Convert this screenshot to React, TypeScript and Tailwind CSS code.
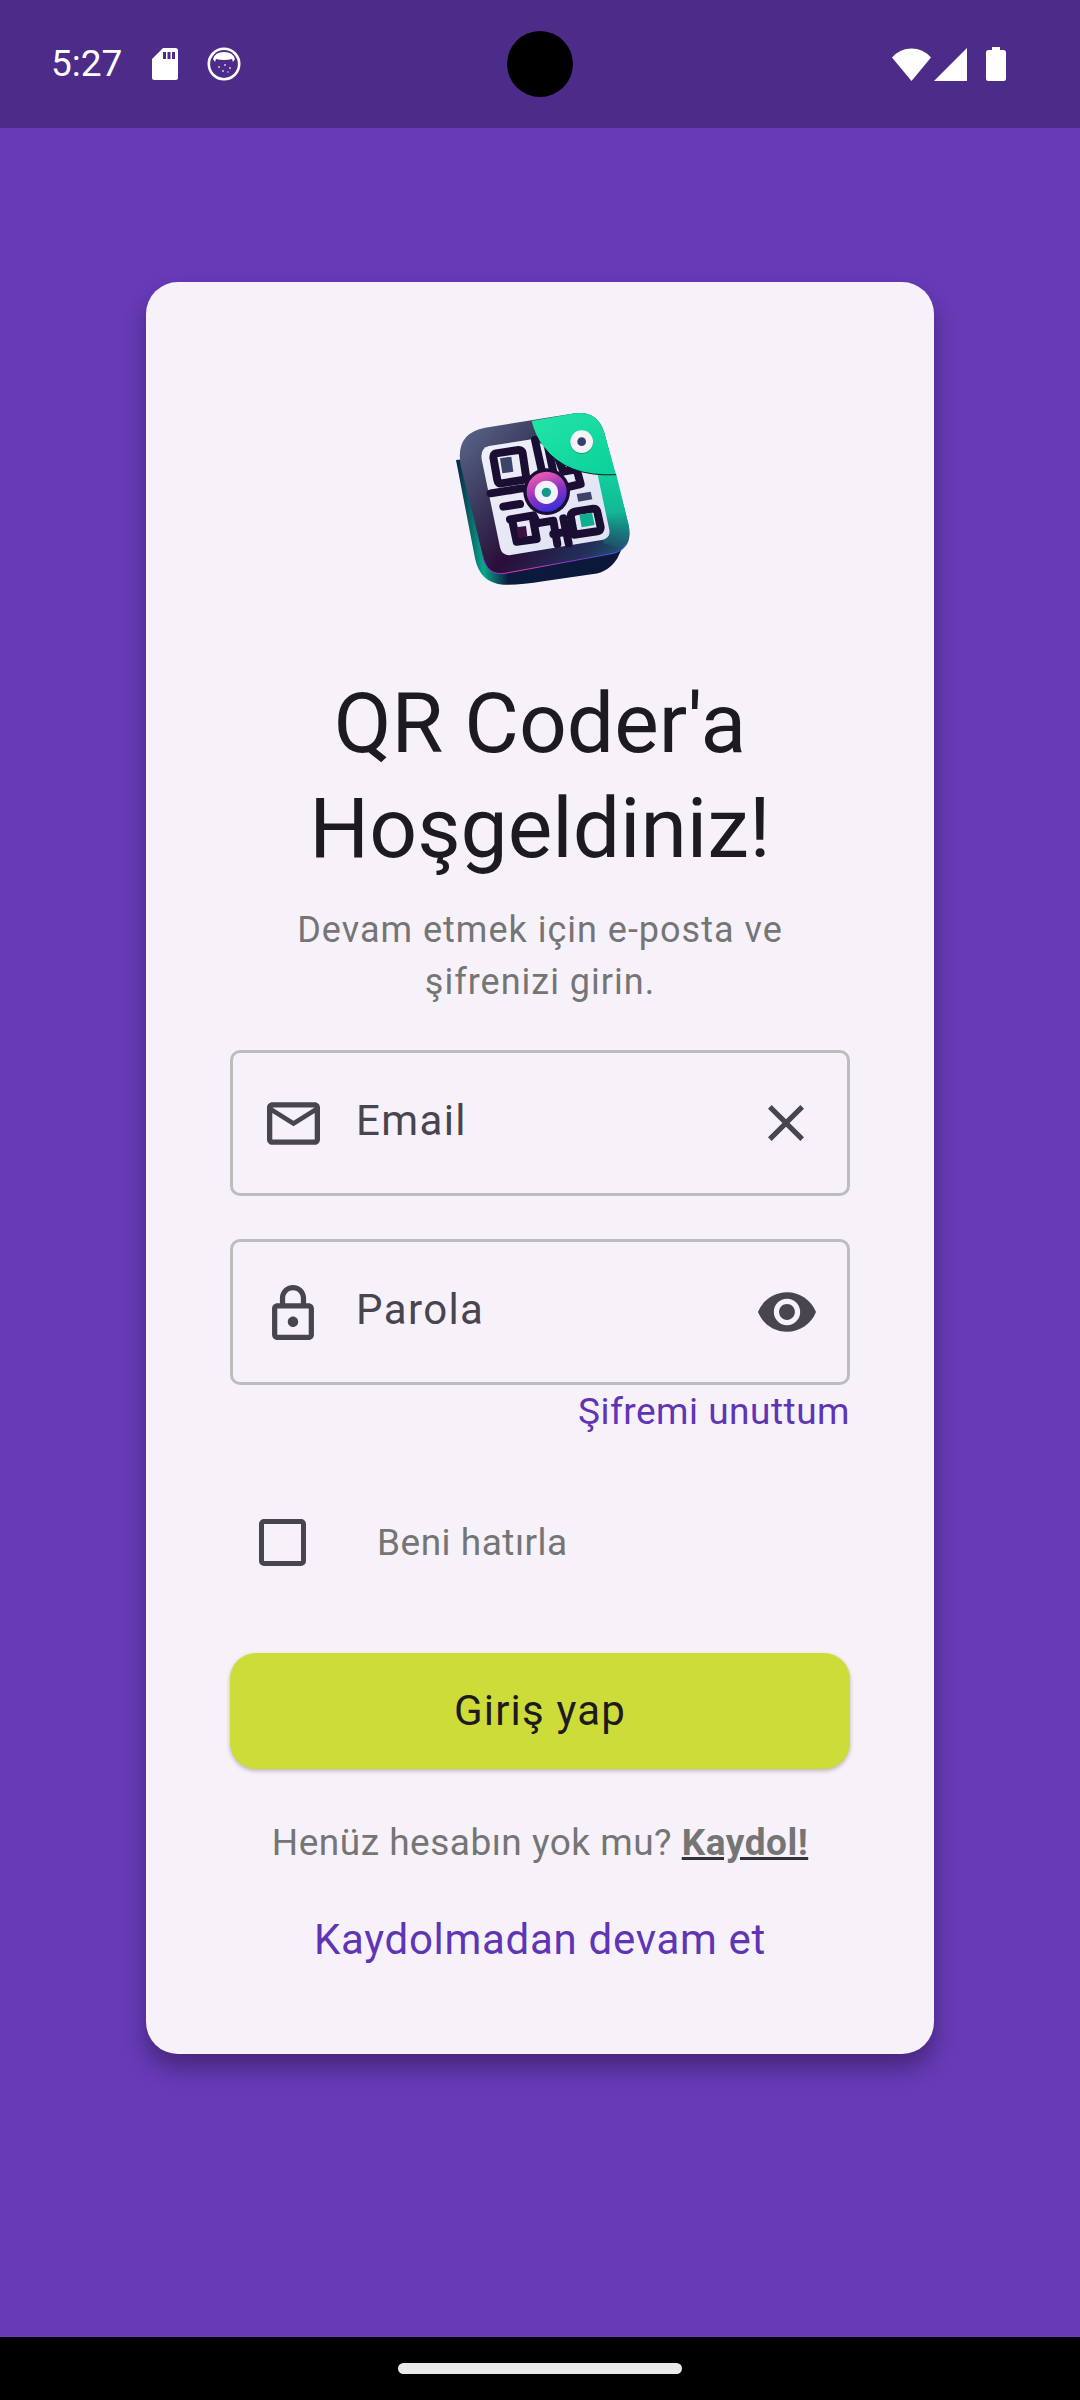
import React from "react";

const Logo = () => (
  <svg viewBox="0 0 720 600" className="w-[240px] h-[200px] block">
    <defs>
      <linearGradient id="face" x1="0.05" y1="0.05" x2="1" y2="0.85">
        <stop offset="0" stopColor="#59668a" />
        <stop offset="0.3" stopColor="#3c3a5c" />
        <stop offset="0.58" stopColor="#2a0d3a" />
        <stop offset="0.85" stopColor="#22305a" />
        <stop offset="1" stopColor="#1c5a70" />
      </linearGradient>
      <linearGradient id="side" gradientUnits="userSpaceOnUse" x1="590" y1="250" x2="600" y2="480">
        <stop offset="0" stopColor="#10d09c" />
        <stop offset="0.5" stopColor="#12b898" />
        <stop offset="1" stopColor="#12b898" stopOpacity="0" />
      </linearGradient>
      <linearGradient id="base" x1="0" y1="0" x2="1" y2="0">
        <stop offset="0" stopColor="#0a1f45" />
        <stop offset="0.16" stopColor="#0aa88c" />
        <stop offset="0.3" stopColor="#0a1b3e" />
        <stop offset="1" stopColor="#0c1738" />
      </linearGradient>
      <linearGradient id="rim" x1="0" y1="0" x2="1" y2="0">
        <stop offset="0" stopColor="#6a2bd0" />
        <stop offset="0.25" stopColor="#ec3fa8" />
        <stop offset="0.7" stopColor="#7a35d8" />
        <stop offset="1" stopColor="#3f5cf0" />
      </linearGradient>
      <linearGradient id="flap" x1="0" y1="0" x2="1" y2="1">
        <stop offset="0" stopColor="#22e6a6" />
        <stop offset="1" stopColor="#0ccf9c" />
      </linearGradient>
      <linearGradient id="qr" x1="0" y1="0" x2="1" y2="1">
        <stop offset="0" stopColor="#f0f0fa" />
        <stop offset="1" stopColor="#dfe0f2" />
      </linearGradient>
      <linearGradient id="lens" x1="0.3" y1="0" x2="0.7" y2="1">
        <stop offset="0" stopColor="#f45fb0" />
        <stop offset="0.55" stopColor="#8a2fc0" />
        <stop offset="1" stopColor="#2f2fe0" />
      </linearGradient>
    </defs>
    <path d="M108 210 L165 505 Q180 580 250 584 Q300 586 370 574 L520 552 Q565 548 592 505 L628 430 L560 300 L200 200 Z" fill="url(#base)" />
    <path d="M195 113 L465 70 Q530 60 552 125 L626 405 Q640 475 580 490 L255 550 Q200 558 188 495 L122 225 Q105 130 195 113 Z" fill="url(#face)" />
    <path d="M525 235 L588 250 L626 405 Q632 445 612 478 L550 460 Z" fill="url(#side)" />
    <path d="M188 495 Q200 558 255 550 L580 490 Q605 484 618 462" fill="none" stroke="url(#rim)" strokeWidth="3" />
    <path d="M207 168 L335 148 L530 240 L568 420 Q572 445 545 450 L272 495 Q246 499 240 472 L185 208 Q180 174 207 168 Z" fill="url(#qr)" />
    <g fill="none" stroke="#1b0e33" strokeWidth="24" strokeLinejoin="round" strokeLinecap="round">
      <path d="M228 190 L296 180 Q306 180 308 190 L318 258 Q318 268 308 270 L244 280 Q234 282 232 270 L220 202 Q220 192 228 190 Z" />
      <path d="M345 150 L365 240" />
      <path d="M385 175 L402 255" />
      <path d="M415 205 L430 245 L470 238 L482 282 L440 292" />
      <path d="M212 310 L300 296 Q325 290 330 320" />
      <path d="M250 350 L300 342" />
      <path d="M270 388 L340 376 L352 400" />
      <path d="M278 398 L290 455 L350 447 L340 392" />
      <path d="M350 400 L400 392 L412 462" />
      <path d="M430 385 L446 460" />
      <path d="M400 432 L460 422" />
      <path d="M468 364 L520 356 Q530 356 532 366 L542 412 Q542 422 532 424 L462 434 L452 378 Q452 368 468 364 Z" />
    </g>
    <path d="M240 205 L274 200 L280 245 L247 250 Z" fill="#3d4468" />
    <path d="M470 312 L512 305 L517 328 L475 335 Z" fill="#3d4468" />
    <path d="M478 374 L516 368 L524 405 L485 412 Z" fill="#0fae90" />
    <path d="M290 412 L318 408 L322 440 L295 444 Z" fill="#3a1440" />
    <circle cx="380" cy="305" r="70" fill="#1b0e33" />
    <circle cx="380" cy="305" r="60" fill="url(#lens)" />
    <circle cx="379" cy="307" r="35" fill="#f2f2fa" />
    <circle cx="379" cy="307" r="14" fill="#129a86" />
    <path d="M335 93 L465 70 Q530 60 552 125 L588 254 Q440 262 372 172 Q345 135 335 93 Z" fill="url(#flap)" />
    <path d="M372 172 Q440 262 588 254" fill="none" stroke="#0c1a33" strokeWidth="3" />
    <circle cx="485" cy="158" r="34" fill="#1b3a4a" opacity="0.35" />
    <circle cx="485" cy="155" r="34" fill="#f4f4f6" />
    <circle cx="485" cy="155" r="13" fill="#33406c" />
  </svg>
);

const icon = "fill-[#49454f] shrink-0";

const App = () => {
  return (
    <div className="w-[1080px] h-[2400px] flex flex-col bg-[#673ab7] font-['Roboto',sans-serif]">
      <div className="relative h-[128px] shrink-0 bg-[#4c2c88] flex items-center justify-between pl-[51px] pr-[74px] text-white">
        <div className="flex items-center">
          <span className="text-[37px] leading-[44px] font-normal mr-[30px]">5:27</span>
          <svg viewBox="0 0 26 32" className="w-[26px] h-[32px] fill-white mr-[29px]">
            <path d="M11 0 H23.5 Q26 0 26 2.5 V29.5 Q26 32 23.5 32 H2.5 Q0 32 0 29.5 V11 Z M11 4 V11 H14 V4 Z M15.5 4 V11 H18.5 V4 Z M20 4 V11 H23 V4 Z" fillRule="evenodd" />
          </svg>
          <svg viewBox="0 0 34 34" className="w-[34px] h-[34px]">
            <circle cx="17" cy="17" r="15.2" fill="none" stroke="#ffffff" strokeWidth="2.6" />
            <circle cx="17" cy="17" r="12" fill="#4c2c88" />
            <path d="M6 12 Q8 5 17 5 Q26 5 28 12 L26 15 L25 12 Q21 13 17 13 Q13 13 9 12 L8 15 Z" fill="#ffffff" />
            <g fill="#ffffff" opacity="0.75">
              <circle cx="12" cy="20" r="1" />
              <circle cx="18" cy="18" r="1" />
              <circle cx="23" cy="21" r="1" />
              <circle cx="16" cy="24" r="1" />
              <circle cx="21" cy="25" r="0.8" />
            </g>
          </svg>
        </div>
        <div className="absolute left-[507px] top-[31px] w-[66px] h-[66px] rounded-full bg-black" />
        <div className="flex items-center">
          <svg viewBox="0 0 39 33" className="w-[39px] h-[33px] fill-white mr-[3px]">
            <path d="M19.5 33 L0 9.5 Q8 0.5 19.5 0.5 Q31 0.5 39 9.5 Z" />
          </svg>
          <svg viewBox="0 0 33 33" className="w-[33px] h-[33px] fill-white mr-[19px]">
            <path d="M33 0 V33 H0 Z" />
          </svg>
          <svg viewBox="0 0 20 34" className="w-[20px] h-[34px] fill-white">
            <path d="M6 0 H14 V3 H17.5 Q20 3 20 5.5 V31.5 Q20 34 17.5 34 H2.5 Q0 34 0 31.5 V5.5 Q0 3 2.5 3 H6 Z" />
          </svg>
        </div>
      </div>

      <div className="flex-1 px-[146px] pt-[154px]">
        <div className="h-[1772px] rounded-[32px] bg-[#f7f2fa] shadow-[0_14px_22px_rgba(0,0,0,0.32)] px-[84px] flex flex-col">
          <div className="flex justify-center mt-[108px]">
            <Logo />
          </div>
          <h1 className="mt-[81px] text-center text-[84px] leading-[105px] font-normal text-[#1d1b20]">
            QR Coder'a
            <br />
            Hoşgeldiniz!
          </h1>
          <p className="mt-[23px] px-[30px] text-center text-[36px] leading-[52px] tracking-[1px] text-[#757575]">
            Devam etmek için e-posta ve şifrenizi girin.
          </p>

          <div className="mt-[42px] h-[146px] rounded-[10px] border-[3px] border-[#bdbdbd] flex items-center pl-[34px] pr-[30px]">
            <svg viewBox="2 4 20 16" className={`w-[53px] h-[43px] ${icon}`}>
              <path d="M20 4H4c-1.1 0-1.99.9-1.99 2L2 18c0 1.1.9 2 2 2h16c1.1 0 2-.9 2-2V6c0-1.1-.9-2-2-2zm0 14H4V8l8 5 8-5v10zm-8-7L4 6h16l-8 5z" />
            </svg>
            <span className="ml-[36px] flex-1 pb-[5px] text-[42px] leading-[50px] tracking-[1.4px] text-[#49454f]">Email</span>
            <svg viewBox="5 5 14 14" className={`w-[36px] h-[36px] mr-[13px] ${icon}`}>
              <path d="M19 6.41L17.59 5 12 10.59 6.41 5 5 6.41 10.59 12 5 17.59 6.41 19 12 13.41 17.59 19 19 17.59 13.41 12z" />
            </svg>
          </div>

          <div className="mt-[43px] h-[146px] rounded-[10px] border-[3px] border-[#bdbdbd] flex items-center pl-[39px] pr-[31px]">
            <svg viewBox="4 1 16 21" className={`w-[42px] h-[55px] ${icon}`}>
              <path d="M18 8h-1V6c0-2.76-2.24-5-5-5S7 3.24 7 6v2H6c-1.1 0-2 .9-2 2v10c0 1.1.9 2 2 2h12c1.1 0 2-.9 2-2V10c0-1.1-.9-2-2-2zM9 6c0-1.66 1.34-3 3-3s3 1.34 3 3v2H9V6zm9 14H6V10h12v10zm-6-3c1.1 0 2-.9 2-2s-.9-2-2-2-2 .9-2 2 .9 2 2 2z" />
            </svg>
            <span className="ml-[42px] flex-1 pb-[5px] text-[42px] leading-[50px] tracking-[1.4px] text-[#49454f]">Parola</span>
            <svg viewBox="1 4.5 22 15" className={`w-[58px] h-[40px] ${icon}`}>
              <path d="M12 4.5C7 4.5 2.73 7.61 1 12c1.73 4.39 6 7.5 11 7.5s9.27-3.11 11-7.5c-1.73-4.39-6-7.5-11-7.5zM12 17c-2.76 0-5-2.24-5-5s2.24-5 5-5 5 2.24 5 5-2.24 5-5 5zm0-8c-1.66 0-3 1.34-3 3s1.34 3 3 3 3-1.34 3-3-1.34-3-3-3z" />
            </svg>
          </div>

          <div className="mt-[5px] text-right text-[37px] leading-[44px] tracking-[0.5px] text-[#6035b5]">Şifremi unuttum</div>

          <div className="mt-[85px] flex items-center pl-[29px]">
            <div className="w-[47px] h-[47px] rounded-[5px] border-[5px] border-[#49454f]" />
            <span className="ml-[71px] text-[37px] leading-[47px] tracking-[0.5px] text-[#757575]">Beni hatırla</span>
          </div>

          <button className="mt-[87px] h-[116px] pb-[2px] rounded-[26px] bg-[#cddc39] shadow-[0_2px_4px_rgba(0,0,0,0.25)] text-[42px] tracking-[1.2px] text-[#1d1b20]">
            Giriş yap
          </button>

          <p className="mt-[49px] text-center text-[37px] leading-[50px] tracking-[0.5px] text-[#757575]">
            Henüz hesabın yok mu? <span className="font-bold underline decoration-[#333333]">Kaydol!</span>
          </p>

          <div className="mt-[47px] text-center text-[42px] leading-[50px] tracking-[0.7px] text-[#6035b5]">Kaydolmadan devam et</div>
        </div>
      </div>

      <div className="h-[63px] shrink-0 bg-black flex items-center justify-center">
        <div className="w-[284px] h-[11px] rounded-full bg-[#eaeaea]" />
      </div>
    </div>
  );
};

export default App;
